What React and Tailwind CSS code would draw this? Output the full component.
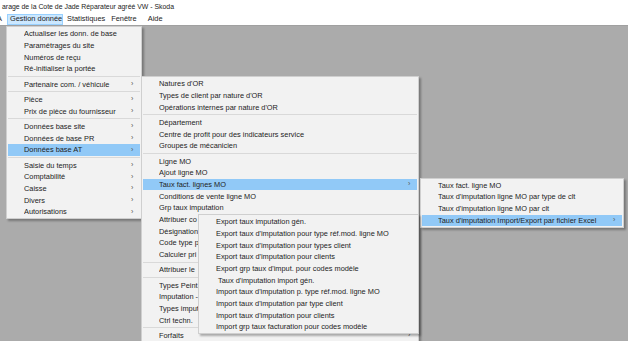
const menu1 = [
  { label: 'Actualiser les donn. de base' },
  { label: 'Paramétrages du site' },
  { label: 'Numéros de reçu' },
  { label: 'Ré-initialiser la portée' },
  { sep: true },
  { label: 'Partenaire com. / véhicule', arrow: true },
  { sep: true },
  { label: 'Pièce', arrow: true },
  { label: 'Prix de pièce du fournisseur', arrow: true },
  { sep: true },
  { label: 'Données base site', arrow: true },
  { label: 'Données de base PR', arrow: true },
  { label: 'Données base AT', arrow: true, active: true },
  { sep: true },
  { label: 'Saisie du temps', arrow: true },
  { label: 'Comptabilité', arrow: true },
  { label: 'Caisse', arrow: true },
  { label: 'Divers', arrow: true },
  { label: 'Autorisations', arrow: true },
]

// items partly hidden by the last submenu only show their visible start
const menu2 = [
  { label: "Natures d'OR" },
  { label: "Types de client par nature d'OR" },
  { label: "Opérations internes par nature d'OR" },
  { sep: true },
  { label: 'Département' },
  { label: 'Centre de profit pour des indicateurs service' },
  { label: 'Groupes de mécanicien' },
  { sep: true },
  { label: 'Ligne MO' },
  { label: 'Ajout ligne MO' },
  { label: 'Taux fact. lignes MO', arrow: true, active: true },
  { label: 'Conditions de vente ligne MO' },
  { label: 'Grp taux imputation' },
  { label: 'Attribuer co' },
  { label: 'Désignation' },
  { label: 'Code type p' },
  { label: 'Calculer pri' },
  { sep: true },
  { label: 'Attribuer le' },
  { sep: true },
  { label: 'Types Peint.' },
  { label: 'Imputation -' },
  { label: 'Types imput' },
  { label: 'Ctrl techn.' },
  { sep: true },
  { label: 'Forfaits', arrow: true },
]

const menu3 = [
  { label: 'Taux fact. ligne MO' },
  { label: "Taux d'imputation ligne MO par type de clt" },
  { label: "Taux d'imputation ligne MO par clt" },
  { label: "Taux d'imputation Import/Export par fichier Excel", arrow: true, active: true },
]

const menu4 = [
  { label: 'Export taux imputation gén.' },
  { label: "Export taux d'imputation pour type réf.mod. ligne MO" },
  { label: "Export taux d'imputation pour types client" },
  { label: "Export taux d'imputation pour clients" },
  { label: "Export grp taux d'imput. pour codes modèle" },
  { label: "\u00a0Taux d'imputation import gén." },
  { label: "Import taux d'imputation p. type réf.mod. ligne MO" },
  { label: "Import taux d'imputation par type client" },
  { label: "Import taux d'imputation pour clients" },
  { label: 'Import grp taux facturation pour codes modèle' },
]

function Menu({ items, className }) {
  return (
    <div
      className={`absolute bg-[#f2f2f2] border border-[#cfcfcf] shadow-[2px_2px_2px_rgba(0,0,0,0.3)] ${className}`}
    >
      {items.map((it, i) =>
        it.sep ? (
          <div key={i} className="h-[3.6px] flex items-center px-px">
            <div className="h-px w-full bg-[#d9d9d9]" />
          </div>
        ) : (
          <div
            key={i}
            className={`h-[11.7px] flex items-center mx-px pl-[16px] pr-[5px] ${it.active ? 'bg-[#91c9f7]' : ''}`}
          >
            <span className="flex-1 whitespace-nowrap overflow-hidden">{it.label}</span>
            {it.arrow && <span className="text-[#555] text-[7px] w-[4px]">›</span>}
          </div>
        )
      )}
    </div>
  )
}

export default function App() {
  return (
    <div
      className="h-[341px] w-[628px] overflow-hidden flex flex-col bg-white text-[#222] text-[7.4px]"
      style={{ fontFamily: '"Liberation Sans", Arial, sans-serif' }}
    >
      {/* Title bar */}
      <div className="h-[13px] flex items-center pl-[2px] pt-[1px] text-[6.9px]">
        arage de la Cote de Jade Réparateur agréé VW - Skoda
      </div>

      {/* Menu bar */}
      <div className="h-[13px] flex items-center border-b border-[#a0a0a0] whitespace-nowrap">
        <span className="w-[7px] overflow-hidden">
          <span className="ml-[-3px]">A</span>
        </span>
        <span className="h-[11px] flex items-center px-[2px] bg-[#cce8ff] border border-[#99d1ff] w-[56px]">
          Gestion donnée
        </span>
        <span className="ml-[4px]">Statistiques</span>
        <span className="ml-[6px]">Fenêtre</span>
        <span className="ml-[11px]">Aide</span>
      </div>

      {/* Workspace */}
      <div className="flex-1 relative bg-[#ababab]">
        <Menu items={menu1} className="left-[6px] top-0 w-[136px] pt-[1px] pb-[0.5px]" />
        <Menu items={menu2} className="left-[141px] top-[50px] w-[278px] pt-[1px]" />
        <Menu items={menu3} className="left-[420px] top-[152px] w-[204px] pt-[0.5px] pb-[0.5px]" />
        <Menu items={menu4} className="left-[198px] top-[188px] w-[221px] pt-[1px] pb-[0.5px]" />
      </div>
    </div>
  )
}
